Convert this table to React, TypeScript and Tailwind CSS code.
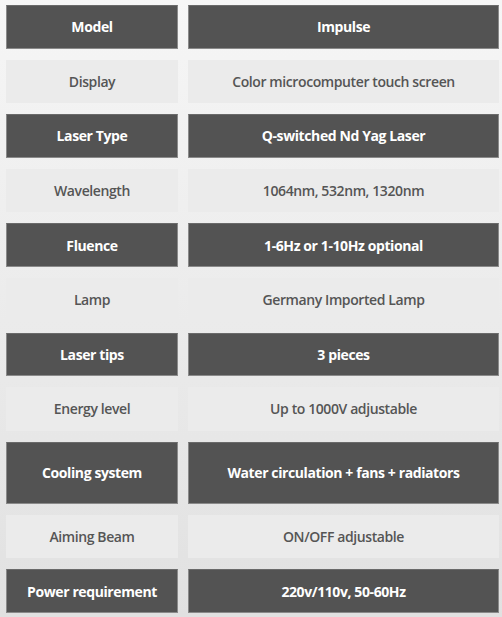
import React from "react";

const rows: { label: string; value: string; dark: boolean; tall?: boolean }[] = [
  { label: "Model", value: "Impulse", dark: true },
  { label: "Display", value: "Color microcomputer touch screen", dark: false },
  { label: "Laser Type", value: "Q-switched Nd Yag Laser", dark: true },
  { label: "Wavelength", value: "1064nm, 532nm, 1320nm", dark: false },
  { label: "Fluence", value: "1-6Hz or 1-10Hz optional", dark: true },
  { label: "Lamp", value: "Germany Imported Lamp", dark: false },
  { label: "Laser tips", value: "3 pieces", dark: true },
  { label: "Energy level", value: "Up to 1000V adjustable", dark: false },
  { label: "Cooling system", value: "Water circulation + fans + radiators", dark: true, tall: true },
  { label: "Aiming Beam", value: "ON/OFF adjustable", dark: false },
  { label: "Power requirement", value: "220v/110v, 50-60Hz", dark: true },
];

function Cell({ text, dark, tall }: { text: string; dark: boolean; tall?: boolean }) {
  return (
    <div
      className={
        "flex items-center justify-center text-center text-[14px] tracking-[-0.4px] " +
        (tall ? "h-[62px] " : "h-[43.6px] ") +
        (dark
          ? "bg-[#535353] border border-[#8a8a8a] border-t-[#6a6a6a] text-white font-bold"
          : "bg-[#ebebeb] text-[#555555] font-semibold")
      }
    >
      {text}
    </div>
  );
}

export default function App() {
  return (
    <div
      className="w-[502px] h-[617px] overflow-hidden bg-linear-to-b from-[#f6f6f6] to-[#e1e1e1] pl-[6px] pr-[4px] pt-[5px]"
      style={{ fontFamily: '"Open Sans", "Noto Sans", sans-serif' }}
    >
      <div className="flex flex-col gap-[11px]">
        {rows.map((r) => (
          <div key={r.label} className="grid grid-cols-[172px_311px] gap-[10px]">
            <Cell text={r.label} dark={r.dark} tall={r.tall} />
            <Cell text={r.value} dark={r.dark} tall={r.tall} />
          </div>
        ))}
      </div>
    </div>
  );
}
